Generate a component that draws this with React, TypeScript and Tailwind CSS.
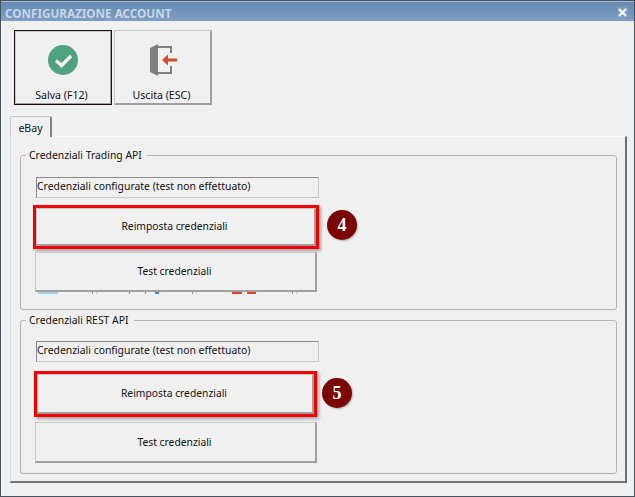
const font = "font-['Noto_Sans','Liberation_Sans',sans-serif]"

function ToolButton({ label, focused, children }: { label: string; focused?: boolean; children: React.ReactNode }) {
  return (
    <div className={`w-[98px] h-[75px] border ${focused ? 'border-[#1c0f0f]' : 'border-[#c8c8c8] border-r-[#a0a0a0] border-b-[#a0a0a0]'}`}>
      <div className={`h-full flex flex-col items-center border border-r-[#a0a0a0] border-b-[#a0a0a0] ${focused ? 'border-t-[#c8c8c8] border-l-[#c8c8c8]' : 'border-t-transparent border-l-transparent'}`}>
        <div className="mt-[12px] h-[32px] flex items-center justify-center">{children}</div>
        <span className="mt-[12px] -ml-[3px] text-[10.6px] leading-[14px] text-[#111]">{label}</span>
      </div>
    </div>
  )
}

function BigButton({ label, className }: { label: string; className: string }) {
  return (
    <div className={`flex items-center justify-center border border-[#c8c8c8] border-r-2 border-b-2 border-r-[#a0a0a0] border-b-[#a0a0a0] bg-[#f0f0f0] pr-[2px] pt-[1px] text-[10.3px] text-[#111] ${className}`}>
      {label}
    </div>
  )
}

function Badge({ n, className }: { n: string; className: string }) {
  return (
    <div className={`absolute w-[30px] h-[30px] rounded-full bg-[#7b0505] text-white flex items-center justify-center text-[18px] font-bold font-['Liberation_Serif',serif] shadow-[1px_1px_2px_#0004] ${className}`}>
      {n}
    </div>
  )
}

function GroupBox({ title, n, height, redClass, badgeClass, statusMt, testClass, children }: { title: string; n: string; height: string; redClass: string; badgeClass: string; statusMt: string; testClass: string; children?: React.ReactNode }) {
  return (
    <fieldset className={`relative ml-[9px] mr-[8px] border border-[#b4b4b4] rounded-[3px] ${height}`}>
      <legend className="ml-[5px] pl-[3px] pr-[5px] text-[10.4px] leading-[14px] text-[#111]">{title}</legend>
      <div className={`ml-[15px] w-[283px] h-[21px] border border-[#c8c8c8] border-t-[#8a8a8a] border-l-[#8a8a8a] text-[10.4px] leading-[17px] text-[#111] ${statusMt}`}>
        Credenziali configurate (test non effettuato)
      </div>
      <div className={`border-[3px] border-[#f00000] shadow-[2px_2px_3px_#0005] ${redClass}`}>
        <BigButton label="Reimposta credenziali" className="w-full h-full" />
      </div>
      <BigButton label="Test credenziali" className={`ml-[14px] w-[282px] ${testClass}`} />
      {children}
      <Badge n={n} className={badgeClass} />
    </fieldset>
  )
}

export default function App() {
  return (
    <div className={`${font} w-[635px] h-[497px] flex flex-col overflow-hidden border border-[#46525e] bg-[#f0f0f0]`}>
      <div className="h-[20px] flex items-center justify-between pt-[3px] pl-[4px] pr-[6px] border-t border-t-[#a9bdd3] bg-gradient-to-b from-[#6489b1] to-[#7e9fc4] shrink-0">
        <span className="text-[11.7px] font-bold leading-[14px] text-[#c9d6e6]">CONFIGURAZIONE ACCOUNT</span>
        <span className="w-[11px] h-[11px] -mt-[1px] flex items-center justify-center bg-[#7e9cc0]">
          <svg width="9" height="9" viewBox="0 0 9 9">
            <path d="M1 1 L8 8 M8 1 L1 8" stroke="#fff" strokeWidth="2.2" />
          </svg>
        </span>
      </div>

      <div className="flex gap-[2px] ml-[13px] mt-[9px]">
        <ToolButton label="Salva (F12)" focused>
          <svg width="30" height="30" viewBox="0 0 30 30">
            <circle cx="15" cy="15" r="15" fill="#4fa17f" />
            <path d="M8 15.5 L13.5 20.5 L23 11" fill="none" stroke="#fff" strokeWidth="3.2" />
          </svg>
        </ToolButton>
        <ToolButton label="Uscita (ESC)">
          <svg width="30" height="32" viewBox="0 0 30 32">
            <path d="M2 4 L10 0 V32 L2 28 Z" fill="#808080" />
            <path d="M10 3 H23 V9 M23 22 V29 H10" fill="none" stroke="#808080" strokeWidth="2" />
            <path d="M14 16 L20 10.5 V14.5 H29 V17.5 H20 V21.5 Z" fill="#d5492e" />
          </svg>
        </ToolButton>
      </div>

      <div className="relative ml-[9px] mr-[7px] mt-[11px] flex flex-col h-[367px]">
        <div className="self-start h-[21px] w-[42px] -mb-[1px] z-10 flex items-center justify-center border border-[#c8c8c8] border-r-2 border-r-[#808080] border-b-0 rounded-t-[2px] bg-[#f0f0f0] pt-[3px] text-[10.6px] text-[#111]">
          eBay
        </div>
        <div className="flex-1 flex flex-col border border-[#fafafa] border-r-2 border-r-[#707070] border-b-2 border-b-[#707070] border-l-[#dcdcdc] pt-[11px]">
          <GroupBox
            title="Credenziali Trading API"
            n="4"
            height="h-[162px]"
            redClass="ml-[12px] mt-[7px] w-[286px] h-[44px]"
            badgeClass="left-[306px] top-[48px]"
            statusMt="mt-[15px]"
            testClass="mt-[3px] h-[40px]"
          >
            {/* leftovers of the captured page under the button */}
            <div className="flex h-[2px] ml-[17px]">
              <div className="w-[20px] bg-[#a8d0ea]" />
              <div className="ml-[34px] w-[1px] bg-[#999]" />
              <div className="ml-[3px] w-[1px] bg-[#ccc]" />
              <div className="ml-[32px] w-[1px] bg-[#999]" />
              <div className="ml-[15px] w-[1px] bg-[#999]" />
              <div className="ml-[9px] w-[4px] bg-[#3b8edb]" />
              <div className="ml-[33px] w-[1px] bg-[#999]" />
              <div className="ml-[3px] w-[1px] bg-[#ccc]" />
              <div className="ml-[35px] w-[10px] bg-[#e8432a]" />
              <div className="ml-[5px] w-[9px] bg-[#e8432a]" />
              <div className="ml-[36px] w-[1px] bg-[#999]" />
              <div className="ml-[3px] w-[1px] bg-[#ccc]" />
            </div>
          </GroupBox>
          <GroupBox
            title="Credenziali REST API"
            n="5"
            height="h-[161px] mt-[3px]"
            redClass="ml-[13px] mt-[9px] w-[283px] h-[46px]"
            badgeClass="left-[301px] top-[51px]"
            statusMt="mt-[14px]"
            testClass="mt-[5px] h-[41px]"
          />
        </div>
      </div>
    </div>
  )
}
